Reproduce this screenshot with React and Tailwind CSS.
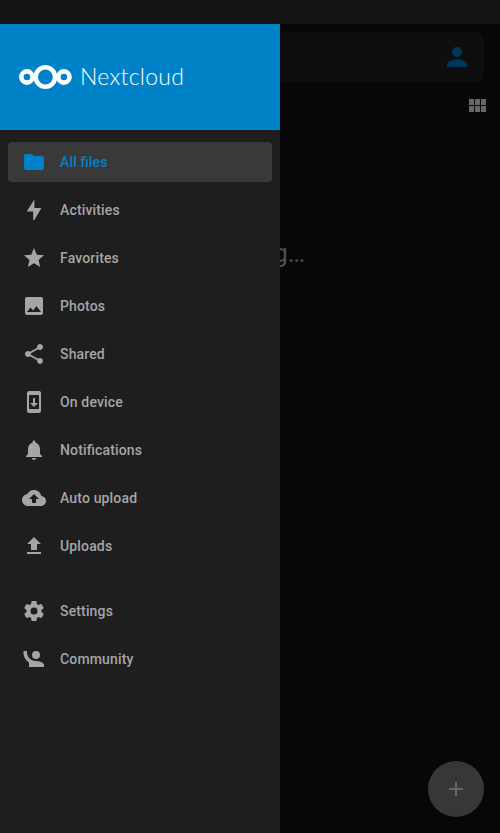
import React from "react";

const ICONS = {
  folder: "M10 4H4c-1.1 0-1.99.9-1.99 2L2 18c0 1.1.9 2 2 2h16c1.1 0 2-.9 2-2V8c0-1.1-.9-2-2-2h-8l-2-2z",
  bolt: "M12 2L4.7 13.4H11.2V22.2H12.2L19.4 10.1H12.4V2Z",
  star: "M12 17.27L18.18 21l-1.64-7.03L22 9.24l-7.19-.61L12 2 9.19 8.63 2 9.24l5.46 4.73L5.82 21z",
  image: "M21 19V5c0-1.1-.9-2-2-2H5c-1.1 0-2 .9-2 2v14c0 1.1.9 2 2 2h14c1.1 0 2-.9 2-2zM8.5 13.5l2.5 3.01L14.5 12l4.5 6H5l3.5-4.5z",
  share: "M18 16.08c-.76 0-1.44.3-1.96.77L8.91 12.7c.05-.23.09-.46.09-.7s-.04-.47-.09-.7l7.05-4.11c.54.5 1.25.81 2.04.81 1.66 0 3-1.34 3-3s-1.34-3-3-3-3 1.34-3 3c0 .24.04.47.09.7L8.04 9.81C7.5 9.31 6.79 9 6 9c-1.66 0-3 1.34-3 3s1.34 3 3 3c.79 0 1.5-.31 2.04-.81l7.12 4.16c-.05.21-.08.43-.08.65 0 1.61 1.31 2.92 2.92 2.92 1.61 0 2.92-1.31 2.92-2.92s-1.31-2.92-2.92-2.92z",
  device: "M17 1.01L7 1c-1.1 0-2 .9-2 2v18c0 1.1.9 2 2 2h10c1.1 0 2-.9 2-2V3c0-1.1-.9-1.99-2-1.99zM17 19H7V5h10v14zm-1-6h-3V8h-2v5H8l4 4 4-4z",
  bell: "M12 22c1.1 0 2-.9 2-2h-4c0 1.1.89 2 2 2zm6-6v-5c0-3.07-1.64-5.64-4.5-6.32V4c0-.83-.67-1.5-1.5-1.5s-1.5.67-1.5 1.5v.68C7.63 5.36 6 7.92 6 11v5l-2 2v1h16v-1l-2-2z",
  cloud: "M19.35 10.04C18.67 6.59 15.64 4 12 4 9.11 4 6.6 5.64 5.35 8.04 2.34 8.36 0 10.91 0 14c0 3.31 2.69 6 6 6h13c2.76 0 5-2.24 5-5 0-2.64-2.05-4.78-4.65-4.96zM14 13v4h-4v-4H7l5-5 5 5h-3z",
  upload: "M9 16h6v-6h4l-7-7-7 7h4zm-4 2h14v2H5z",
  cog: "M12,15.5A3.5,3.5 0 0,1 8.5,12A3.5,3.5 0 0,1 12,8.5A3.5,3.5 0 0,1 15.5,12A3.5,3.5 0 0,1 12,15.5M19.43,12.97C19.47,12.65 19.5,12.33 19.5,12C19.5,11.67 19.47,11.34 19.43,11L21.54,9.37C21.73,9.22 21.78,8.95 21.66,8.73L19.66,5.27C19.54,5.05 19.27,4.96 19.05,5.05L16.56,6.05C16.04,5.66 15.5,5.32 14.87,5.07L14.5,2.42C14.46,2.18 14.25,2 14,2H10C9.75,2 9.54,2.18 9.5,2.42L9.13,5.07C8.5,5.32 7.96,5.66 7.44,6.05L4.95,5.05C4.73,4.96 4.46,5.05 4.34,5.27L2.34,8.73C2.21,8.95 2.27,9.22 2.46,9.37L4.57,11C4.53,11.34 4.5,11.67 4.5,12C4.5,12.33 4.53,12.65 4.57,12.97L2.46,14.63C2.27,14.78 2.21,15.05 2.34,15.27L4.34,18.73C4.46,18.95 4.73,19.03 4.95,18.95L7.44,17.94C7.96,18.34 8.5,18.68 9.13,18.93L9.5,21.58C9.54,21.82 9.75,22 10,22H14C14.25,22 14.46,21.82 14.5,21.58L14.87,18.93C15.5,18.67 16.04,18.34 16.56,17.94L19.05,18.95C19.27,19.03 19.54,18.95 19.66,18.73L21.66,15.27C21.78,15.05 21.73,14.78 21.54,14.63L19.43,12.97Z",
  community: "M1.5,4V5.5C1.5,9.65 3.71,13.28 7,15.3V20H22V18C22,15.34 16.67,14 14,14C14,14 13.83,14 13.75,14C9,14 5,10 5,5.5V4M14,4A4,4 0 0,0 10,8A4,4 0 0,0 14,12A4,4 0 0,0 18,8A4,4 0 0,0 14,4Z",
  account: "M12,4A4,4 0 0,1 16,8A4,4 0 0,1 12,12A4,4 0 0,1 8,8A4,4 0 0,1 12,4M12,14C16.42,14 20,15.79 20,18V20H4V18C4,15.79 7.58,14 12,14Z",
  grid: "M4 11h5V5H4v6zm0 7h5v-6H4v6zm6 0h5v-6h-5v6zm6 0h5v-6h-5v6zm-6-7h5V5h-5v6zm6-6v6h5V5h-5z",
  plus: "M19 13h-6v6h-2v-6H5v-2h6V5h2v6h6v2z",
};

function Icon({ name, className = "size-6" }) {
  return (
    <svg viewBox="0 0 24 24" fill="currentColor" className={`block shrink-0 ${className}`} aria-hidden="true">
      <path d={ICONS[name]} />
    </svg>
  );
}

const MAIN = [
  ["folder", "All files"],
  ["bolt", "Activities"],
  ["star", "Favorites"],
  ["image", "Photos"],
  ["share", "Shared"],
  ["device", "On device"],
  ["bell", "Notifications"],
  ["cloud", "Auto upload"],
  ["upload", "Uploads"],
];

const SECONDARY = [
  ["cog", "Settings"],
  ["community", "Community"],
];

function NavItem({ icon, label, active }) {
  return (
    <li
      className={`flex h-10 items-center gap-3.5 rounded pl-3.5 text-sm font-medium tracking-[0.15px] [font-feature-settings:'liga'_1] ${
        active ? "bg-[#393939] text-[#0082c9]" : "text-[#a5a5a5]"
      }`}
    >
      <Icon name={icon} />
      <span>{label}</span>
    </li>
  );
}

function Logo() {
  return (
    <div className="flex items-center">
      <svg width="54" height="26" viewBox="0 0 54 26" fill="none" stroke="#fff" aria-hidden="true">
        <circle cx="27.4" cy="13" r="9.7" strokeWidth="4.5" />
        <circle cx="8.9" cy="13" r="5.6" strokeWidth="4.6" />
        <circle cx="45.9" cy="13" r="5.6" strokeWidth="4.6" />
      </svg>
      <span className="mb-[3px] ml-2 font-['Lato',sans-serif] text-[23px] leading-6 font-light tracking-[0.3px] text-white">
        Nextcloud
      </span>
    </div>
  );
}

export default function App() {
  return (
    <div className="relative flex h-[833px] w-[500px] flex-col overflow-hidden bg-[#070707] font-['Roboto',sans-serif]">
      <div className="h-6 shrink-0 bg-[#141414]" />
      <main className="flex grow flex-col">
        <div className="mx-4 mt-2 flex h-[50px] items-center justify-end rounded-lg bg-[#0e0e0e] pr-3 text-[#003657]">
          <Icon name="account" className="size-[30px]" />
        </div>
        <div className="mt-3 flex justify-end pr-[11px] text-[#676767]">
          <Icon name="grid" />
        </div>
        <p className="mt-[119px] text-center text-[26px] leading-8 text-[#505050]">Loading…</p>
        <div className="mt-auto mr-4 mb-4 flex size-14 items-center justify-center self-end rounded-full bg-[#373737] text-[#676767]">
          <Icon name="plus" />
        </div>
      </main>

      <aside className="absolute top-6 bottom-0 left-0 flex w-[280px] flex-col bg-[#1e1e1e]">
        <header className="flex h-[106px] shrink-0 items-center bg-[#0082c9] pl-[18px]">
          <Logo />
        </header>
        <nav className="px-2 pt-3">
          <ul className="flex flex-col gap-2">
            {MAIN.map(([icon, label], i) => (
              <NavItem key={label} icon={icon} label={label} active={i === 0} />
            ))}
          </ul>
          <ul className="mt-[25px] flex flex-col gap-2">
            {SECONDARY.map(([icon, label]) => (
              <NavItem key={label} icon={icon} label={label} />
            ))}
          </ul>
        </nav>
      </aside>
    </div>
  );
}
